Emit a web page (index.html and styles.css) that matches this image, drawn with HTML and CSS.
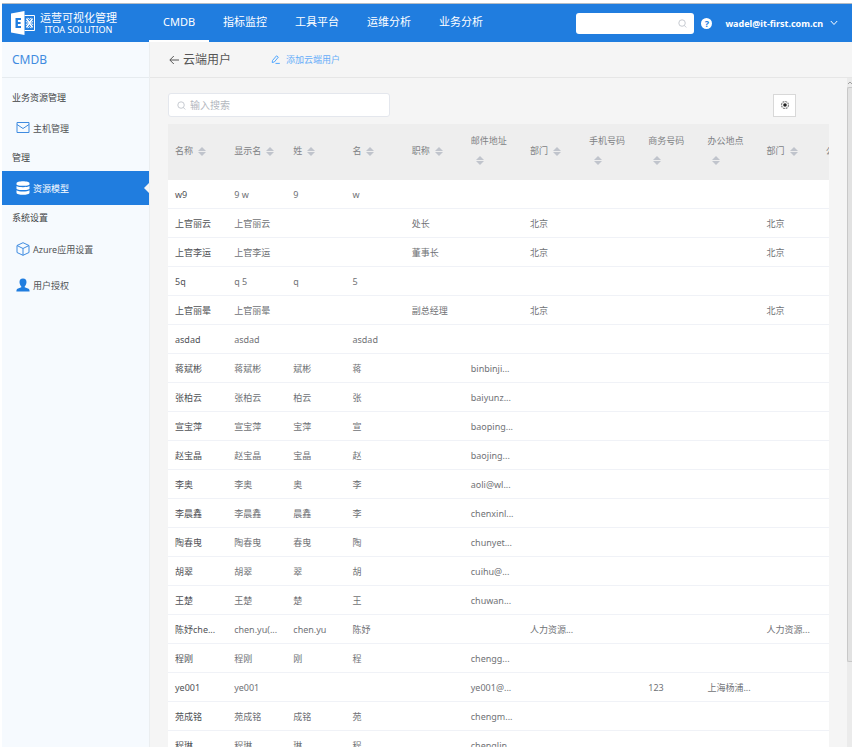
FILE: index.html
```html
<!DOCTYPE html>
<html lang="zh-CN">
<head>
  <meta charset="UTF-8" />
  <meta name="viewport" content="width=device-width, initial-scale=1" />
  <title>云端用户 - CMDB</title>
  <link rel="stylesheet" href="styles.css">
</head>
<body>
  <header class="topbar">
    <a class="logo" href="#">
      <svg class="logo-icon" viewBox="0 0 24 24" width="24" height="24">
        <path d="M0 2.500L13.500 0V24L0 21.500Z" fill="#fff"/>
        <path d="M4.500 7H10V9.100H6.900V11H9.600V13H6.900V14.900H10V17H4.500Z" fill="#207ddf"/>
        <path d="M13.500 4.500H23.500V19.500H13.500" fill="none" stroke="#fff" stroke-width="1"/>
        <path d="M15.500 7.500L21.500 16.500M21.500 7.500L15.500 16.500" fill="none" stroke="#fff" stroke-width="1.500"/>
        <path d="M17 6.800L18.500 8.500L20 6.800M17 17.200L18.500 15.500L20 17.200M15 10L16.500 12L15 14M22 10L20.500 12L22 14" fill="none" stroke="#fff" stroke-width="0.900"/>
      </svg>
      <span class="logo-text">
        <span class="logo-name">运营可视化管理</span>
        <span class="logo-sub">ITOA SOLUTION</span>
      </span>
    </a>
    <nav class="nav">
      <a class="active" href="#">CMDB</a>
      <a href="#">指标监控</a>
      <a href="#">工具平台</a>
      <a href="#">运维分析</a>
      <a href="#">业务分析</a>
    </nav>
    <div class="topbar-right">
      <div class="top-search">
        <input type="text" aria-label="搜索" />
        <svg viewBox="0 0 10 10" width="9" height="9" fill="none" stroke="#c0c4cc"><circle cx="4.500" cy="4.500" r="3.600"/><path d="M7 7.200L9.200 9.400"/></svg>
      </div>
      <a class="help" href="#" aria-label="帮助">?</a>
      <button class="account" type="button">
        wadel@it-first.com.cn
        <svg viewBox="0 0 8 6" width="8" height="6" fill="none" stroke="#fff"><path d="M0.800 1L4 4.500L7.200 1"/></svg>
      </button>
    </div>
  </header>

  <div class="layout">
    <aside class="sidebar">
      <div class="sidebar-title">CMDB</div>
      <div class="menu">
        <h3>业务资源管理</h3>
        <a class="menu-item" href="#">
          <svg viewBox="0 0 14 14" width="14" height="14" fill="none" stroke="#3f8be0"><path d="M1 1.500H13V11.500H1ZM1 3.500L7 7.500L13 3.500"/></svg>
          主机管理
        </a>
        <h3>管理</h3>
        <a class="menu-item active" href="#">
          <svg viewBox="0 0 14 14" width="14" height="14" fill="#fff"><path d="M0.500 2.400C0.500 -0.400 13.500 -0.400 13.500 2.400V3.200C13.500 5.400 0.500 5.400 0.500 3.200Z"/><path d="M0.500 5C2.500 6.600 11.500 6.600 13.500 5V7.400C13.500 9.600 0.500 9.600 0.500 7.400Z"/><path d="M0.500 9.300C2.500 10.900 11.500 10.900 13.500 9.300V11.700C13.500 14.400 0.500 14.400 0.500 11.700Z"/></svg>
          资源模型
        </a>
        <h3>系统设置</h3>
        <div class="menu-settings">
          <a class="menu-item" href="#">
            <svg viewBox="0 0 14 14" width="14" height="14" fill="none" stroke="#3f8be0" stroke-linejoin="round"><path d="M7 0.700L13 3.500V10.500L7 13.300L1 10.500V3.500ZM1 3.500L7 6.500L13 3.500M7 6.500V13.300"/></svg>
            Azure应用设置
          </a>
          <a class="menu-item" href="#">
            <svg viewBox="0 0 14 14" width="14" height="14" fill="#207ddf"><path d="M7 0.500C9.500 0.500 10.600 2.200 10.500 4.300C10.400 6.200 9.500 7.600 8.700 8.400V9.300L12.500 10.800C13.200 11.100 13.600 12 13.600 13.500H0.400C0.400 12 0.800 11.100 1.500 10.800L5.300 9.300V8.400C4.500 7.600 3.600 6.200 3.500 4.300C3.400 2.200 4.500 0.500 7 0.500Z"/></svg>
            用户授权
          </a>
        </div>
      </div>
    </aside>

    <main class="main">
      <div class="page-head">
        <a class="back" href="#">
          <svg viewBox="0 0 10 10" width="10" height="10" fill="none" stroke="#555"><path d="M10 5H1M4.800 1L0.800 5L4.800 9"/></svg>
          云端用户
        </a>
        <a class="add-user" href="#">
          <svg viewBox="0 0 9 9" width="9" height="9" fill="none" stroke="#409eff" stroke-width="0.900"><path d="M1.500 5.500L5.500 0.800L7.300 2.200L3.300 7L1.200 7.500ZM4.500 8.400H8.800"/></svg>
          添加云端用户
        </a>
      </div>

      <div class="content">
        <div class="panel">
          <div class="toolbar">
            <div class="search">
              <svg viewBox="0 0 10 10" width="9" height="9" fill="none" stroke="#c0c4cc"><circle cx="4.500" cy="4.500" r="3.600"/><path d="M7 7.200L9.200 9.400"/></svg>
              <input type="text" placeholder="输入搜索" aria-label="输入搜索" />
            </div>
            <button class="setting" type="button" aria-label="设置">
              <svg viewBox="0 0 10 10" width="10" height="10"><circle cx="5" cy="5" r="3.500" fill="none" stroke="#888" stroke-width="1.200" stroke-dasharray="2 0.700"/><circle cx="5" cy="5" r="1.800" fill="#222"/></svg>
            </button>
          </div>
          <div class="table-wrap">
            <table>
              <thead>
                <tr id="columns"></tr>
              </thead>
              <tbody id="users"></tbody>
            </table>
          </div>
        </div>
        <div class="scrollbar">
          <svg viewBox="0 0 6 9" width="6" height="9" fill="none" stroke="#a0a0a0"><path d="M1 6L3 4L5 6"/></svg>
          <div class="scrollbar-thumb"></div>
        </div>
      </div>
    </main>
  </div>

  <script>
    const columns = ['名称', '显示名', '姓', '名', '职称', '邮件地址', '部门', '手机号码', '商务号码', '办公地点', '部门', '公司'];

    const users = [
      ['w9', '9 w', '9', 'w'],
      ['上官丽云', '上官丽云', '', '', '处长', '', '北京', '', '', '', '北京'],
      ['上官李运', '上官李运', '', '', '董事长', '', '北京', '', '', '', '北京'],
      ['5q', 'q 5', 'q', '5'],
      ['上官丽晕', '上官丽晕', '', '', '副总经理', '', '北京', '', '', '', '北京'],
      ['asdad', 'asdad', '', 'asdad'],
      ['蒋斌彬', '蒋斌彬', '斌彬', '蒋', '', 'binbinji...'],
      ['张柏云', '张柏云', '柏云', '张', '', 'baiyunz...'],
      ['宣宝萍', '宣宝萍', '宝萍', '宣', '', 'baoping...'],
      ['赵宝晶', '赵宝晶', '宝晶', '赵', '', 'baojing...'],
      ['李奥', '李奥', '奥', '李', '', 'aoli@wl...'],
      ['李晨鑫', '李晨鑫', '晨鑫', '李', '', 'chenxinl...'],
      ['陶春曳', '陶春曳', '春曳', '陶', '', 'chunyet...'],
      ['胡翠', '胡翠', '翠', '胡', '', 'cuihu@...'],
      ['王楚', '王楚', '楚', '王', '', 'chuwan...'],
      ['陈妤che...', 'chen.yu(...', 'chen.yu', '陈妤', '', '', '人力资源...', '', '', '', '人力资源...'],
      ['程刚', '程刚', '刚', '程', '', 'chengg...'],
      ['ye001', 'ye001', '', '', '', 'ye001@...', '', '', '123', '上海杨浦...'],
      ['苑成铭', '苑成铭', '成铭', '苑', '', 'chengm...'],
      ['程琳', '程琳', '琳', '程', '', 'chenglin...']
    ];

    document.getElementById('columns').innerHTML = columns.map(name =>
      '<th scope="col">' + name + '<button class="sort" type="button" aria-label="排序"></button></th>'
    ).join('');

    document.getElementById('users').innerHTML = users.map(user =>
      '<tr>' + columns.map((name, i) => '<td>' + (user[i] || '') + '</td>').join('') + '</tr>'
    ).join('');
  </script>
</body>
</html>
```
FILE: styles.css
```css
* {
  box-sizing: border-box;
}

body {
  margin: 0;
  padding: 3px 0 0 2px;
  height: 100vh;
  display: flex;
  flex-direction: column;
  overflow: hidden;
  background: #fff;
  font-family: "Noto Sans", "Noto Sans CJK SC", sans-serif;
  font-size: 9px;
  color: #606266;
}

a {
  color: inherit;
  text-decoration: none;
}

button,
input {
  font-family: inherit;
  margin: 0;
  padding: 0;
  border: none;
  outline: none;
}

button {
  cursor: pointer;
}

svg {
  flex: none;
}

/* top bar */
.topbar {
  flex: none;
  display: flex;
  height: 39px;
  background: #207ddf;
  border-top: 1px solid #b5bcc4;
  color: #fff;
}

.logo {
  flex: none;
  display: flex;
  align-items: center;
  gap: 5px;
  width: 147px;
  padding-left: 9px;
}

.logo-text {
  display: flex;
  flex-direction: column;
  align-items: center;
}

.logo-name {
  font-size: 11px;
  line-height: 14px;
}

.logo-sub {
  font-size: 9px;
  line-height: 10px;
}

.nav {
  display: flex;
}

.nav a {
  padding: 0 14px;
  font-size: 11px;
  line-height: 36px;
  white-space: nowrap;
  border-bottom: 2px solid transparent;
}

.nav a.active {
  border-bottom-color: #fff;
}

.topbar-right {
  display: flex;
  align-items: center;
  margin-left: auto;
  padding-right: 14px;
}

.top-search {
  display: flex;
  align-items: center;
  width: 118px;
  height: 21px;
  padding-right: 7px;
  background: #fff;
  border-radius: 3px;
}

.top-search input {
  flex: 1;
  min-width: 0;
  padding-left: 8px;
  background: none;
  font-size: 10px;
}

.help {
  width: 11px;
  height: 11px;
  margin: 0 13px 0 7px;
  border-radius: 50%;
  background: #fff;
  color: #207ddf;
  font-weight: bold;
  line-height: 11px;
  text-align: center;
}

.account {
  display: flex;
  align-items: center;
  gap: 7px;
  background: none;
  color: #fff;
  font-size: 9px;
  font-weight: bold;
}

.layout {
  flex: 1;
  display: flex;
  min-height: 0;
}

/* sidebar */
.sidebar {
  flex: none;
  width: 147px;
  background: #f6fafe;
}

.sidebar-title {
  height: 36px;
  padding-left: 10px;
  border-bottom: 1px solid #e6ebef;
  color: #3f8be0;
  font-size: 12px;
  line-height: 35px;
}

.menu {
  padding-top: 7px;
}

.menu h3 {
  margin: 0;
  padding-left: 10px;
  color: #404244;
  font-size: 9px;
  font-weight: normal;
  line-height: 26px;
}

.menu-item {
  display: flex;
  align-items: center;
  gap: 3px;
  height: 34px;
  padding-left: 14px;
  color: #505254;
}

.menu-settings .menu-item {
  height: 36px;
}

.menu-item.active {
  position: relative;
  background: #207ddf;
  color: #fff;
}

.menu-item.active::after {
  content: "";
  position: absolute;
  right: 0;
  top: 12px;
  border: 5px solid transparent;
  border-left: none;
  border-right-color: #f5f5f5;
}

/* main area */
.main {
  flex: 1;
  display: flex;
  flex-direction: column;
  min-width: 0;
  background: #f5f5f5;
  border-left: 1px solid #ebeef0;
}

.page-head {
  flex: none;
  display: flex;
  align-items: center;
  gap: 40px;
  height: 36px;
  padding-left: 19px;
  border-bottom: 1px solid #e6e6e6;
}

.back {
  display: flex;
  align-items: center;
  gap: 4px;
  color: #555;
  font-size: 12px;
  line-height: 16px;
}

.add-user {
  display: flex;
  align-items: center;
  gap: 6px;
  color: #66adf9;
}

.content {
  flex: 1;
  display: flex;
  min-height: 0;
}

.panel {
  flex: 1;
  min-width: 0;
  padding: 15px 18px 0;
}

.toolbar {
  display: flex;
  align-items: center;
  justify-content: space-between;
  margin-bottom: 7px;
  padding-right: 33px;
}

.search {
  display: flex;
  align-items: center;
  gap: 4px;
  width: 222px;
  height: 24px;
  padding-left: 8px;
  background: #fff;
  border: 1px solid #e4e7ed;
  border-radius: 3px;
}

.search input {
  flex: 1;
  min-width: 0;
  background: none;
  color: #606266;
  font-size: 10px;
}

.search input::placeholder {
  color: #b4b8c0;
}

.setting {
  display: flex;
  align-items: center;
  justify-content: center;
  width: 23px;
  height: 23px;
  background: #fff;
  border: 1px solid #d8d8d8;
}

.table-wrap {
  overflow: hidden;
}

table {
  width: 100%;
  min-width: 710px;
  table-layout: fixed;
  border-collapse: separate;
  border-spacing: 0;
  background: #fff;
}

th,
td {
  padding: 0 7px;
  text-align: left;
  white-space: nowrap;
}

th {
  height: 56px;
  padding-bottom: 4px;
  background: #eee;
  color: #808285;
  font-weight: normal;
  line-height: 19px;
  white-space: normal;
}

td {
  height: 29px;
  border-bottom: 1px solid #f0f2f7;
  color: #707276;
}

td:first-child {
  color: #505256;
}

/* up and down carets */
.sort {
  display: inline-flex;
  flex-direction: column;
  align-items: center;
  gap: 1px;
  width: 18px;
  background: none;
  vertical-align: middle;
}

.sort::before,
.sort::after {
  content: "";
  border: 4px solid transparent;
}

.sort::before {
  border-top: none;
  border-bottom: 4px solid #c0c4cc;
}

.sort::after {
  border-bottom: none;
  border-top: 4px solid #c0c4cc;
}

.scrollbar {
  flex: none;
  width: 5px;
  background: #ebebeb;
}

.scrollbar svg {
  display: block;
}

.scrollbar-thumb {
  height: 86%;
  background: #e2e2e2;
  border: 1px solid #c8c8c8;
  border-right: none;
  border-radius: 2px 0 0 2px;
}
```
